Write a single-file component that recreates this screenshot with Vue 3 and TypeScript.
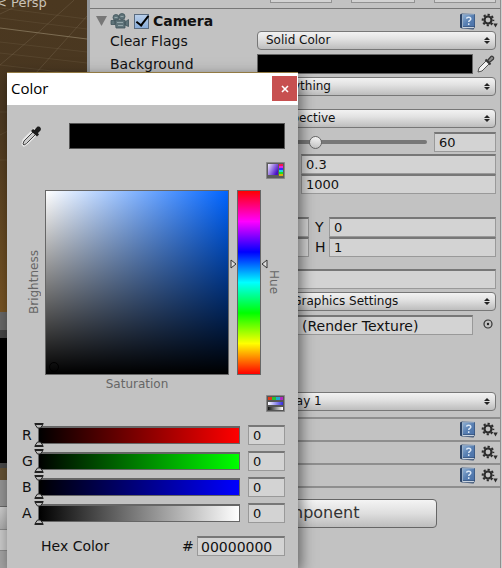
<script setup lang="ts">
import { reactive, ref } from 'vue'

interface Channel {
  name: string
  color: string
  value: number
}

const channels = reactive<Channel[]>([
  { name: 'R', color: '#ff0000', value: 0 },
  { name: 'G', color: '#00ff00', value: 0 },
  { name: 'B', color: '#0000ff', value: 0 },
  { name: 'A', color: '#ffffff', value: 0 },
])

const enabled = ref(true)
const fov = ref(60)
const hue = ref(218)
const hex = ref('00000000')
const components = ['GUI Layer', 'Flare Layer', 'Audio Listener']
</script>

<template>
  <div class="editor">
    <svg width="0" height="0" class="defs" aria-hidden="true">
      <defs>
        <linearGradient id="bookFill" x1="0" y1="0" x2="1" y2="1">
          <stop offset="0" stop-color="#8fb0d4" />
          <stop offset="0.5" stop-color="#587fb2" />
          <stop offset="1" stop-color="#4a71a8" />
        </linearGradient>
        <linearGradient id="violet" x1="0" y1="0" x2="1" y2="0.6">
          <stop offset="0" stop-color="#efeaff" />
          <stop offset="1" stop-color="#4a10c8" />
        </linearGradient>
        <linearGradient id="mono">
          <stop offset="0" stop-color="#111" />
          <stop offset="1" stop-color="#fff" />
        </linearGradient>
        <linearGradient id="blues">
          <stop offset="0" stop-color="#fff" />
          <stop offset="1" stop-color="#3328e0" />
        </linearGradient>
        <symbol id="book" viewBox="0 0 17 17">
          <path d="M1 1.5 3 .5 16 1v13l-1.500 2.500L3 15.500 1 14.500z" fill="#2c4467" />
          <path d="M4 1.500h11.500v12H4z" fill="url(#bookFill)" />
          <path d="M3.500 14V1.200h12" fill="none" stroke="#b9cde2" stroke-width=".8" />
          <path d="M3 14h12.500l-1 1.300H3.600z" fill="#c9d3df" />
          <path d="M7.500 5.600c.3-2 4.300-2 4.300.3 0 1.600-2.100 1.500-2.100 3.200M9.700 10.300v1.700" fill="none" stroke="#dbe7f5" stroke-width="1.500" />
        </symbol>
        <symbol id="gear" viewBox="0 0 18 16">
          <circle cx="7" cy="7" r="3.500" fill="none" stroke="#2c2c2c" stroke-width="2.200" />
          <circle cx="7" cy="7" r="5.300" fill="none" stroke="#2c2c2c" stroke-width="2" stroke-dasharray="2.200 1.963" stroke-dashoffset="1.100" />
          <path d="M12.300 10.600h4.400L14.500 14.500z" fill="#2c2c2c" />
        </symbol>
      </defs>
    </svg>

    <aside class="scene">
      <div class="viewport">
        <svg class="grid-lines" preserveAspectRatio="none" viewBox="0 0 88 312" aria-hidden="true">
          <g fill="none" stroke="#8a7a60">
            <path d="M0 28 88 39" stroke-width="1" opacity=".8" />
            <path d="M0 65 38 33 75 0M30 80 88 16M0 14 30 0" opacity=".3" />
            <path d="M0 8 88 19M0 18 88 29M0 42 88 52M0 53 88 63M0 65 88 75M0 112h8M0 135l8-4M0 160h8" opacity=".2" />
          </g>
        </svg>
        <span class="projection">&lt; Persp</span>
      </div>
      <div class="scene-tab"></div>
      <div class="game"></div>
      <div class="strip"></div>
      <div class="ground"></div>
      <div class="tab"></div>
      <div class="tool"></div>
      <div class="search"></div>
    </aside>

    <main class="inspector">
      <div class="upper">
        <span></span><span></span><span></span>
      </div>
      <header class="head">
        <svg class="fold" width="12" height="12" viewBox="0 0 12 12" aria-hidden="true"><path d="M0 1h11L5.500 11z" fill="#777" /></svg>
        <svg width="20" height="16" viewBox="0 0 20 16" aria-hidden="true">
          <g fill="#5f7379" stroke="#40545a" stroke-width=".8">
            <circle cx="6" cy="4.500" r="3" /><circle cx="12" cy="3.500" r="3" />
            <path d="M5 7h10v8H6zM1 7.500h4v4H1zM15 9l3.500-2.500v7L15 12z" />
          </g>
          <path d="M7 9.500h6M4.500 4.500h3M10.500 3.500h3M8 12.500h5" stroke="#93a6aa" />
        </svg>
        <input id="camera-on" v-model="enabled" type="checkbox" />
        <label for="camera-on">Camera</label>
        <span class="fill"></span>
        <button class="icon" aria-label="Help"><svg width="17" height="17"><use href="#book" /></svg></button>
        <button class="icon" aria-label="Options"><svg width="18" height="16"><use href="#gear" /></svg></button>
      </header>

      <section class="group first">
        <div class="row">
          <label for="flags">Clear Flags</label>
          <span class="pick"><select id="flags"><option>Solid Color</option></select></span>
        </div>
        <div class="row">
          <label for="background">Background</label>
          <div class="color-line">
            <button id="background" class="swatch"></button>
            <button class="icon" aria-label="Pick background">
              <svg width="20" height="20" viewBox="0 0 20 20">
                <path d="m2 18 1-4 8-8 3 3-8 8z" fill="#f2f2f2" stroke="#555" />
                <path d="m9.500 5.500 5 5" fill="none" stroke="#333" stroke-width="2" />
                <path d="m11.500 6.500 3.500-4c1-1 3.500 1 2.500 2.500l-4 3.500z" fill="#8c8c8c" stroke="#3a3a3a" stroke-width="1.200" />
              </svg>
            </button>
          </div>
        </div>
        <div class="row">
          <span></span>
          <span class="pick"><select aria-label="Culling mask"><option>Everything</option></select></span>
        </div>
      </section>

      <section class="group lens">
        <div class="row">
          <span></span>
          <span class="pick"><select aria-label="Projection"><option>Perspective</option></select></span>
        </div>
        <div class="row">
          <span></span>
          <div class="fov">
            <input v-model="fov" class="range" type="range" min="0" max="180" aria-label="Field of view" />
            <input v-model="fov" class="field" aria-label="Field of view value" />
          </div>
        </div>
      </section>

      <section class="group tight planes">
        <div class="row inset"><span></span><input class="field" value="0.3" aria-label="Near plane" /></div>
        <div class="row inset"><span></span><input class="field" value="1000" aria-label="Far plane" /></div>
      </section>

      <section class="group tight rect">
        <div class="row">
          <span></span>
          <div class="pair">
            <input class="field" aria-label="X" /><label for="ry">Y</label><input id="ry" class="field" value="0" />
          </div>
        </div>
        <div class="row">
          <span></span>
          <div class="pair">
            <input class="field" aria-label="W" /><label for="rh">H</label><input id="rh" class="field" value="1" />
          </div>
        </div>
      </section>

      <section class="group output">
        <div class="row"><span></span><input class="field" aria-label="Depth" /></div>
        <div class="row">
          <span></span>
          <span class="pick"><select aria-label="Rendering path"><option>Use Graphics Settings</option></select></span>
        </div>
        <div class="row">
          <span></span>
          <div class="color-line">
            <input class="field big" value="None (Render Texture)" aria-label="Target texture" />
            <button class="icon" aria-label="Select texture">
              <svg width="20" height="14" viewBox="0 0 20 14"><circle cx="12" cy="6" r="4" fill="none" stroke="#333" stroke-width="1.200" /><circle cx="12" cy="6" r="1.200" fill="#222" /></svg>
            </button>
          </div>
        </div>
      </section>

      <section class="group display">
        <div class="row">
          <span></span>
          <span class="pick"><select aria-label="Target display"><option>Display 1</option></select></span>
        </div>
      </section>

      <div v-for="item in components" :key="item" class="component">
        <button class="icon" :aria-label="item + ' help'"><svg width="17" height="17"><use href="#book" /></svg></button>
        <button class="icon" :aria-label="item + ' options'"><svg width="18" height="16"><use href="#gear" /></svg></button>
      </div>
      <div class="foot">
        <button class="add">Add Component</button>
      </div>
    </main>

    <div class="edge"></div>

    <div class="dialog" role="dialog" aria-labelledby="dialog-title">
      <div class="titlebar">
        <span id="dialog-title">Color</span>
        <button class="close" aria-label="Close">
          <svg width="8" height="8" viewBox="0 0 8 8"><path d="m1 1 6 6M7 1 1 7" stroke="#fff" stroke-width="1.600" /></svg>
        </button>
      </div>
      <div class="body">
        <div class="current">
          <button class="icon" aria-label="Eyedropper">
            <svg width="22" height="24" viewBox="0 0 22 24">
              <path d="m2 21 1-4 10-10 3 3L6 20l-3 2z" fill="#eee" stroke="#e8e8e8" stroke-width="3" />
              <path d="m2 21 1-3 9-9 2.500 2.500-9 9-2.500 1.500z" fill="#ccc" stroke="#444" />
              <path d="m10 8 2-2 1.500 1 2.500-3c2-1.500 5 1 3.500 3.500L17 10l1 1.500-2 2z" fill="#1c1c1c" />
            </svg>
          </button>
          <div class="preview"></div>
        </div>
        <div class="mode">
          <button class="icon" aria-label="Picker mode">
            <svg width="19" height="17" viewBox="0 0 19 17">
              <path d="M.5.500h18v16H.5z" fill="#5c5c5c" stroke="#888" />
              <path d="M2 2h10v11H2z" fill="url(#violet)" />
              <path d="M13 2h4v2h-4z" fill="#f01850" /><path d="M13 4h4v2h-4z" fill="#e020e8" /><path d="M13 6h4v2h-4z" fill="#3030ff" /><path d="M13 8h4v2h-4z" fill="#18d8e0" /><path d="M13 10h4v2h-4z" fill="#20e020" /><path d="M13 12h4v2h-4z" fill="#d8b010" />
            </svg>
          </button>
        </div>
        <div class="picker">
          <span class="axis up">Brightness</span>
          <div class="plane">
            <svg width="12" height="12" viewBox="0 0 12 12" aria-hidden="true"><circle cx="6" cy="6" r="4.500" fill="none" stroke="#000" /></svg>
          </div>
          <div class="hue">
            <input v-model="hue" type="range" min="0" max="360" aria-label="Hue" />
            <svg class="mark left" width="7" height="10" viewBox="0 0 7 10" aria-hidden="true"><path d="M1 1v8l5-4z" fill="#ddd" stroke="#333" /></svg>
            <svg class="mark right" width="7" height="10" viewBox="0 0 7 10" aria-hidden="true"><path d="M6 1v8L1 5z" fill="#ddd" stroke="#333" /></svg>
          </div>
          <span class="axis down">Hue</span>
        </div>
        <div class="saturation">Saturation</div>
        <div class="mode second">
          <button class="icon" aria-label="Slider mode">
            <svg width="19" height="17" viewBox="0 0 19 17">
              <path d="M.5.500h18v16H.5z" fill="#555" stroke="#888" />
              <path d="M2 2h4v3H2z" fill="#e03818" /><path d="M6 2h4v3H6z" fill="#28c030" /><path d="M10 2h4v3h-4z" fill="#20a8d0" /><path d="M14 2h3v3h-3z" fill="#b028c0" />
              <path d="M2 7h15v3H2z" fill="url(#blues)" />
              <path d="M2 12h15v3H2z" fill="url(#mono)" />
            </svg>
          </button>
        </div>
        <div class="channels">
          <div v-for="c in channels" :key="c.name" class="channel">
            <label :for="'ch-' + c.name">{{ c.name }}</label>
            <div class="bar" :style="{ background: `linear-gradient(90deg, #000, ${c.color})` }">
              <input :id="'ch-' + c.name" v-model.number="c.value" type="range" min="0" max="255" />
              <svg class="knob" width="10" height="24" viewBox="0 0 10 24" :style="{ left: (c.value / 255) * 100 + '%' }" aria-hidden="true">
                <g fill="#bbb" stroke="#222">
                  <path d="M1 1.500h8L6.500 5h-3zM1 22.500h8L6.500 19h-3z" />
                  <path d="M.5.500h9M.5 23.500h9" />
                </g>
              </svg>
            </div>
            <input v-model.number="c.value" class="field" :aria-label="c.name + ' value'" />
          </div>
        </div>
        <div class="hex">
          <label for="hex">Hex Color</label>
          <span>#</span>
          <input id="hex" v-model="hex" class="field big" />
        </div>
      </div>
    </div>
  </div>
</template>

<style>
body {
  margin: 0;
  overflow: hidden;
}
</style>

<style scoped>
.editor {
  position: relative;
  display: grid;
  grid-template-columns: 90px 1fr 2px;
  min-height: 100vh;
  overflow: hidden;
  background: #c2c2c2;
  color: #111;
  font: 14px/20px "DejaVu Sans", Verdana, sans-serif;
}
* {
  box-sizing: border-box;
}
.defs {
  position: absolute;
}
button,
input,
select {
  margin: 0;
  min-width: 0;
  font: inherit;
  color: inherit;
}
.icon {
  display: flex;
  flex: none;
  padding: 0;
  border: 0;
  background: none;
}

/* Scene column */
.scene {
  display: flex;
  flex-direction: column;
  border-right: 3px solid #939699;
  background: #a2a2a2;
}
.viewport {
  position: relative;
  height: 312px;
  background: linear-gradient(#4b3820, #493721 35%, #765322);
}
.grid-lines {
  display: block;
  width: 100%;
  height: 100%;
}
.projection {
  position: absolute;
  top: -5px;
  left: -4px;
  color: #c9c2b7;
  font-size: 13px;
  line-height: 15px;
}
.scene-tab {
  height: 26px;
  background: linear-gradient(#666 70%, #444 70%);
}
.game {
  height: 125px;
  background: #000;
}
.strip {
  height: 5px;
  background: #484848;
}
.ground {
  height: 12px;
  background: #625033;
}
.tab {
  height: 26px;
  background: #929292;
}
.tool {
  height: 23px;
  border-top: 1px solid #666;
  background: linear-gradient(#ccc, #aaa);
}
.search {
  height: 22px;
  border: solid #888;
  border-width: 1px 0;
  background: #c8c8c8;
}

/* Inspector */
.inspector {
  display: flex;
  flex-direction: column;
}
.upper {
  display: grid;
  grid-template-columns: 62px 64px 62px;
  justify-content: end;
  gap: 19px;
  height: 9px;
  padding: 0 4px 6px;
  border-bottom: 1px solid #777;
}
.upper span {
  height: 3px;
  border: solid #929292;
  border-width: 0 1px 1px;
  background: #d2d2d2;
}
.head {
  display: flex;
  align-items: center;
  height: 22px;
  padding: 2px 1px 0 6px;
  font-weight: bold;
}
.fold {
  margin-right: 2px;
}
.head input {
  width: 15px;
  height: 15px;
  margin: 0 4px 0 4px;
  appearance: none;
  border: 1px solid #596b80;
  background: linear-gradient(#b9cfeb, #88acd8);
}
.head input:checked::after {
  content: "";
  display: block;
  width: 5px;
  height: 11px;
  margin: -2px 0 0 4px;
  border: solid #000;
  border-width: 0 2px 2px 0;
  transform: rotate(38deg);
}
.fill {
  flex: 1;
}
.head .icon + .icon,
.component .icon + .icon {
  margin-left: 5px;
}
.group {
  display: grid;
  gap: 3px;
  padding: 0 4px 0 20px;
}
.tight {
  gap: 0;
}
.lens {
  margin-top: 12px;
}
.planes {
  margin-top: 2px;
}
.rect {
  margin-top: 23px;
}
.output {
  margin-top: 12px;
}
.display {
  margin: 57px 0 5px;
}
.row {
  display: grid;
  grid-template-columns: 147px 1fr;
  height: 20px;
  line-height: 20px;
}
.inset {
  grid-template-columns: 191px 1fr;
}
.pick {
  position: relative;
  display: block;
  height: 19px;
}
.pick::before,
.pick::after {
  content: "";
  position: absolute;
  right: 6px;
  border: 0 solid transparent;
  border-width: 0 3px;
  pointer-events: none;
}
.pick::before {
  top: 6px;
  border-bottom: 3px solid #222;
}
.pick::after {
  bottom: 6px;
  border-top: 3px solid #222;
}
.pick select {
  display: block;
  width: 100%;
  height: 19px;
  padding: 0 16px 0 8px;
  appearance: none;
  border: 1px solid #777;
  border-radius: 4px;
  background: linear-gradient(#f2f2f2, #e2e2e2 40%, #bdbdbd);
  font-size: 12px;
  line-height: 17px;
}
.field {
  display: block;
  width: 100%;
  height: 20px;
  padding: 0 4px;
  border: 1px solid #999;
  border-top: 2px solid #777;
  border-radius: 0;
  background: #d3d3d3;
  font-size: 13px;
  line-height: 16px;
}
.big {
  padding: 0 3px;
  font-size: 14px;
}
.color-line {
  display: grid;
  grid-template-columns: 1fr 20px;
  align-items: center;
  gap: 3px;
}
.swatch {
  width: 100%;
  height: 20px;
  padding: 0;
  border: 1px solid #666;
  background: #000;
}
.fov {
  display: grid;
  grid-template-columns: 1fr 62px;
  gap: 7px;
}
.range {
  width: 100%;
  height: 20px;
  appearance: none;
  background: none;
}
.range::-webkit-slider-runnable-track {
  height: 4px;
  border-radius: 2px;
  background: #777;
}
.range::-webkit-slider-thumb {
  width: 13px;
  height: 13px;
  margin-top: -4px;
  appearance: none;
  border: 1px solid #666;
  border-radius: 50%;
  background: linear-gradient(#f5f5f5, #c5c5c5);
}
.pair {
  display: grid;
  grid-template-columns: 52px 14px 1fr;
  column-gap: 3px;
}
.pair label {
  padding-left: 3px;
}
.component {
  display: flex;
  align-items: center;
  justify-content: flex-end;
  height: 23px;
  padding-right: 1px;
  border-top: 2px solid #8e8e8e;
}
.foot {
  display: flex;
  justify-content: center;
  padding-top: 11px;
  border-top: 2px solid #8e8e8e;
}
.add {
  width: 284px;
  height: 29px;
  padding: 0 0 2px;
  border: 1px solid #666;
  border-radius: 4px;
  background: linear-gradient(#f4f4f4, #dedede 50%, #bdbdbd);
  color: #333;
  font-size: 16px;
}
.edge {
  border-left: 1px solid #8f8f8f;
  background: #d0d0d0;
}

/* Color dialog */
.dialog {
  position: absolute;
  top: 72px;
  bottom: 0;
  left: 7px;
  width: 291px;
  border-top: 1px solid #927a43;
  background: #c2c2c2;
  box-shadow: 3px 4px 13px rgba(0, 0, 0, 0.5);
}
.titlebar {
  display: flex;
  justify-content: space-between;
  height: 32px;
  padding: 3px 1px 0 4px;
  background: #fff;
  color: #000;
  font: 15px/24px "Open Sans", sans-serif;
}
.close {
  display: grid;
  place-items: center;
  width: 25px;
  height: 25px;
  padding: 0;
  border: 0;
  background: #c75050;
}
.body {
  padding: 18px 13px 0 14px;
}
.current {
  display: flex;
  gap: 26px;
}
.preview {
  flex: 1;
  height: 26px;
  border: 1px solid #555;
  background: #000;
}
.mode {
  display: flex;
  justify-content: flex-end;
  margin-top: 13px;
}
.picker {
  display: flex;
  height: 185px;
  margin-top: 11px;
  padding: 0 4px 0 6px;
}
.axis {
  width: 14px;
  color: #666;
  font-size: 12px;
  line-height: 14px;
  text-align: center;
  writing-mode: vertical-rl;
}
.up {
  transform: rotate(180deg);
}
.down {
  margin-left: 6px;
}
.plane {
  display: flex;
  flex: 1;
  align-items: flex-end;
  margin: 0 8px 0 4px;
  padding: 0 0 1px 2px;
  border: 1px solid #666;
  background: linear-gradient(transparent, #000), linear-gradient(90deg, #fff, #0064ff);
}
.hue {
  position: relative;
  width: 24px;
  border: 1px solid #666;
  background: linear-gradient(#f00, #f0f, #00f, #0ff, #0f0, #ff0, #f00);
}
.hue input {
  width: 100%;
  height: 100%;
  writing-mode: vertical-lr;
  direction: rtl;
  opacity: 0;
}
.mark {
  position: absolute;
  top: 68px;
}
.left {
  left: -8px;
}
.right {
  right: -8px;
}
.saturation {
  padding-right: 32px;
  color: #666;
  font-size: 12px;
  line-height: 18px;
  text-align: center;
}
.second {
  margin-top: 2px;
}
.channels {
  display: grid;
  gap: 6px;
  margin-top: 13px;
}
.channel {
  display: grid;
  grid-template-columns: 17px 1fr 45px;
  align-items: center;
}
.channel label {
  padding-left: 1px;
}
.channel .field {
  width: 37px;
  margin-left: 8px;
}
.bar {
  position: relative;
  height: 18px;
  border: 1px solid #666;
  border-top-width: 2px;
}
.bar input {
  display: block;
  width: 100%;
  height: 100%;
  opacity: 0;
}
.knob {
  position: absolute;
  top: -5px;
  margin-left: -5px;
}
.hex {
  display: grid;
  grid-template-columns: 1fr 15px 88px;
  margin-top: 13px;
  padding-left: 20px;
}
</style>
